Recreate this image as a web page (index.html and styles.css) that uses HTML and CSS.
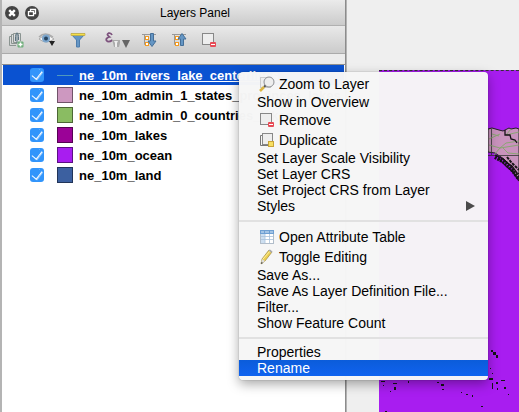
FILE: index.html
```html
<!DOCTYPE html>
<html lang="en">
<head>
<meta charset="utf-8">
<title>Layers Panel</title>
<link rel="stylesheet" href="styles.css">
</head>
<body>
<main class="app">
  <section class="panel">
    <header class="titlebar">
      <button class="round" aria-label="Close panel"><svg width="14" height="14" viewBox="0 0 14 14"><circle cx="7" cy="7" r="7" fill="#444"/><path d="M4.2 4.2l5.6 5.6M9.8 4.2L4.2 9.8" stroke="#fff" stroke-width="2.4"/></svg></button>
      <button class="round" aria-label="Float panel"><svg width="14" height="14" viewBox="0 0 14 14"><circle cx="7" cy="7" r="7" fill="#444"/><path d="M5.5 5.5v-2h5v4h-2M3.5 5.7h5v4h-5z" fill="none" stroke="#fff" stroke-width="1.3"/></svg></button>
      <h1 class="title">Layers Panel</h1>
    </header>
    <div class="toolbar">
      <button class="tool" aria-label="Add group"><svg width="16" height="16" viewBox="0 0 16 16"><path d="M3 4.500H1.500v9H8M5 2.500H3.500v9H9" fill="none" stroke="#8b9491"/><path d="M9 10.500H5.500v-9h7V9" fill="none" stroke="#8b9491"/><path d="M7.500 9V4.500q0-3 1.500-3t1.500 3V8M9 .5V11" fill="none" stroke="#5d7480"/><rect x="9.500" y="9.500" width="6" height="6" rx="1" fill="#6fae7b"/><path d="M12.500 10.500v4M10.500 12.500h4" stroke="#fff" stroke-width="1.500"/></svg></button>
      <button class="tool" aria-label="Manage layer visibility"><svg width="18" height="16" viewBox="0 0 18 16"><path d="M1 5Q7-1 15 5" fill="none" stroke="#aaa" stroke-width="1.500"/><path d="M1 7Q8 0 16 7Q8 13 1 7z" fill="#f5f5f5" stroke="#aaa"/><circle cx="8" cy="6.500" r="4" fill="#7ba5cc"/><circle cx="8" cy="6.500" r="2" fill="#27445f"/><path d="M11 9h6l-3 5z" fill="#222"/></svg></button>
      <button class="tool" aria-label="Filter legend"><svg width="16" height="16" viewBox="0 0 16 16"><path d="M1 2l5.500 6v7h3V8L15 2z" fill="#6596c4" stroke="#4d7cac"/><path d="M1 1.500h14v2H1z" fill="#f5df47" stroke="#c3a634" stroke-width=".6"/></svg></button>
      <button class="tool tool-wide" aria-label="Filter by expression"><svg width="26" height="18" viewBox="0 0 26 18"><path d="M7 4Q6 1.500 3.500 2.200Q1 3.500 4.500 6Q.5 7 1.500 9.500Q3.500 12 7.500 9" fill="none" stroke="#7d527d" stroke-width="1.800"/><path d="M7 9h8v3l-1 4H9l-1-4z" fill="#aaa"/><path d="M9 10h4l-1 2v4h-2v-4z" fill="#eee"/><path d="M17 9h8l-4 8z" fill="#666"/></svg></button>
      <button class="tool" aria-label="Expand all"><svg width="16" height="16" viewBox="0 0 16 16"><path d="M1 2.500h14M3.500 2v10.500H6M3.500 6H6" fill="none" stroke="#999"/><rect x="4.500" y="4.500" width="3" height="3" fill="#fff" stroke="#f39a20"/><rect x="4.500" y="10.500" width="3" height="3" fill="#fff" stroke="#f39a20"/><path d="M9.500 1.500h3V9H15l-4 5.500L7 9h2.500z" fill="#6596c4" stroke="#456f98"/></svg></button>
      <button class="tool" aria-label="Collapse all"><svg width="16" height="16" viewBox="0 0 16 16"><path d="M1 2.500h14M3.500 2v10.500H6M3.500 6H6" fill="none" stroke="#999"/><rect x="4.500" y="4.500" width="3" height="3" fill="#fff" stroke="#f39a20"/><rect x="4.500" y="10.500" width="3" height="3" fill="#fff" stroke="#f39a20"/><path d="M9.500 13.500h3V7H15l-4-5.500L7 7h2.500z" fill="#6596c4" stroke="#456f98"/></svg></button>
      <button class="tool" aria-label="Remove layer"><svg width="16" height="16" viewBox="0 0 16 16"><rect x="1.500" y="1.500" width="11" height="11" fill="#eee" stroke="#888"/><rect x="9" y="10" width="6" height="5" rx="1" fill="#e74b56"/><path d="M10 12.500h4" stroke="#fff"/></svg></button>
    </div>
    <ul class="tree">
      <li class="layer selected"><input type="checkbox" id="rivers" checked><span class="line"></span><label for="rivers">ne_10m_rivers_lake_centerlines</label></li>
      <li class="layer"><input type="checkbox" id="states" checked><span class="swatch pink"></span><label for="states">ne_10m_admin_1_states_provinces_lakes</label></li>
      <li class="layer"><input type="checkbox" id="countries" checked><span class="swatch green"></span><label for="countries">ne_10m_admin_0_countries_lakes</label></li>
      <li class="layer"><input type="checkbox" id="lakes" checked><span class="swatch plum"></span><label for="lakes">ne_10m_lakes</label></li>
      <li class="layer"><input type="checkbox" id="ocean" checked><span class="swatch violet"></span><label for="ocean">ne_10m_ocean</label></li>
      <li class="layer"><input type="checkbox" id="land" checked><span class="swatch blue"></span><label for="land">ne_10m_land</label></li>
    </ul>
  </section>
  <section class="canvas">
    <div class="map">
      <svg width="140" height="341" viewBox="379 71 140 341" role="img" aria-label="Map">
        <path d="M488 129l4-1 7 2 4 1 2-1 4-2 2 1 5-1 3 1v50l-4-5-4-8-7-7-9-6-7-1z" fill="#c993bd" stroke="#222"/>
        <path d="M491.500 129v26M488 155.500h31" stroke="#333" stroke-width=".8"/>
        <path d="M489 139l11-5M489 145l11 3 19-3M500 148l-6 7M511 129l-5 6 13-3M492 134l7 2M500 148l6-5 13-2M503 148l5 5 11 1" fill="none" stroke="#83a86b" stroke-width=".9"/>
        <path d="M505 130v5h5l1 4 4 1 2 3M495 155l8 4 4 4 5 3 5 7 3 1M499 159l8 8 5 4 7 10" fill="none" stroke="#171017" stroke-width="1.300"/>
        <path d="M495 157l11 6 7 8 6 8" fill="none" stroke="#151515" stroke-width="4" stroke-dasharray="2 1"/>
        <path d="M507 157l4 5 8 8" fill="none" stroke="#151515" stroke-width="2" stroke-dasharray="3 1"/>
        <path d="M491 350h2v2h-2zM493 352h3v3h-3zM496 355h2v3h-2zM490 368h1v1h-1zM492 373h1v1h-1zM489 378h4v2h-4zM492 383h1v6h-1zM496 382h2v2h-2zM501 380h4v1h-4zM497 388h1v2h-1zM504 387h2v2h-2zM508 394h1v1h-1zM381 381h4v1h-4zM383 385h1v1h-1zM393 383h4v1h-4zM394 387h2v3h-2zM390 391h1v1h-1zM408 381h1v2h-1zM437 382h2v1h-2zM441 384h3v2h-3zM442 389h2v1h-2zM461 392h1v1h-1zM466 394h2v1h-2zM472 395h1v2h-1zM481 406h2v1h-2zM385 411h2v1h-2z" fill="#141414"/>
      </svg>
    </div>
  </section>
</main>
<nav class="menu" aria-label="Layer actions">
  <button class="item with-icon"><svg width="16" height="16" viewBox="0 0 16 16"><rect x="1.500" y="1.500" width="10" height="10" fill="#eee" stroke="#ccc"/><circle cx="10" cy="6" r="5" fill="#eee" stroke="#8e9094"/><path d="M6.500 9.500L5 11" stroke="#555" stroke-width="2"/><path d="M5 11l-4 4" stroke="#dcb642" stroke-width="2.500"/></svg>Zoom to Layer</button>
  <button class="item">Show in Overview</button>
  <button class="item with-icon"><svg width="16" height="16" viewBox="0 0 16 16"><rect x="1.500" y="1.500" width="11" height="11" fill="#eee" stroke="#888"/><rect x="9" y="10" width="6" height="5" rx="1" fill="#e74b56"/><path d="M10 12.500h4" stroke="#fff"/></svg>Remove</button>
  <button class="item with-icon"><svg width="16" height="16" viewBox="0 0 16 16"><path d="M3 3.500H1.500v10h9" fill="none" stroke="#777"/><rect x="3.500" y="1.500" width="10" height="11" fill="#eee" stroke="#888"/><rect x="9.500" y="9.500" width="5" height="5" fill="#f7df62" stroke="#c9a439"/></svg>Duplicate</button>
  <button class="item">Set Layer Scale Visibility</button>
  <button class="item">Set Layer CRS</button>
  <button class="item">Set Project CRS from Layer</button>
  <button class="item">Styles<span class="arrow"></span></button>
  <hr class="rule">
  <button class="item with-icon"><svg width="16" height="16" viewBox="0 0 16 16"><rect x="1.500" y="1.500" width="13" height="13" fill="#fff" stroke="#b1bdca"/><path d="M1 1h14v4H1z" fill="#6e9fd2"/><path d="M2 3h3M6 3h4M11 3h3" stroke="#d8e8f8"/><path d="M2 5h4v9H2z" fill="#cddff1"/><path d="M2 7.500h12M2 10.500h12M6 5v9M10.500 5v9" stroke="#a8c2dc" stroke-width=".8"/></svg>Open Attribute Table</button>
  <button class="item with-icon"><svg width="16" height="16" viewBox="0 0 16 16"><path d="M2 15l1-5 7-9 3 2-7 9z" fill="#edcf50" stroke="#9f8b42" stroke-width=".7"/><path d="M4 10l7-8" stroke="#fff1a1"/><path d="M2 15l1-5 3 2z" fill="#ddd"/><path d="M2 15l.5-2 1.500 1z" fill="#333"/><path d="M9.500 1.500L11 .5l2.500 2-1 1.500z" fill="#aaa"/></svg>Toggle Editing</button>
  <button class="item">Save As...</button>
  <button class="item">Save As Layer Definition File...</button>
  <button class="item">Filter...</button>
  <button class="item">Show Feature Count</button>
  <hr class="rule">
  <button class="item">Properties</button>
  <button class="item active">Rename</button>
</nav>
</body>
</html>
```
FILE: styles.css
```css
* { box-sizing: border-box; }
body {
  margin: 0;
  font-family: "Liberation Sans", Arial, sans-serif;
  background: #efefef;
  color: #000;
}
button {
  padding: 0;
  border: 0;
  background: none;
  font: inherit;
  color: inherit;
}
svg { display: block; flex: none; }
.app {
  display: grid;
  grid-template-columns: 2fr 1fr;
  min-height: 100vh;
}
.panel {
  display: flex;
  flex-direction: column;
  min-width: 0;
  border-left: 2px solid #b4b4b4;
  border-right: 1px solid #8c8c8c;
  background: #ececec;
}
.titlebar {
  display: flex;
  align-items: center;
  gap: 6px;
  height: 26px;
  padding: 0 0 0 3px;
  border-bottom: 1px solid #b0b0b0;
  background: linear-gradient(#ebebeb, #cbcbcb);
}
.title {
  flex: 1;
  margin: 0;
  font-size: 12px;
  font-weight: 400;
  text-align: center;
}
.toolbar {
  display: flex;
  align-items: center;
  gap: 14px;
  height: 28px;
  padding: 0 6px;
  border-bottom: 1px solid #aaa;
  background: linear-gradient(#e9e9e9, #cbcbcb);
}
.tool-wide { margin: 0 -4px 0 5px; }
.tree {
  flex: 1;
  margin: 10px 0 0;
  padding: 0;
  border-top: 1px solid #8f8f8f;
  background: #fff;
  list-style: none;
  overflow: hidden;
}
.layer {
  display: flex;
  align-items: center;
  height: 20px;
  margin: 0 1px;
  padding-left: 27px;
  font-size: 13px;
  font-weight: 700;
  white-space: nowrap;
}
.selected {
  background: #0a52d1;
  color: #fff;
  text-decoration: underline;
}
.layer input {
  appearance: none;
  display: grid;
  place-items: center;
  flex: none;
  width: 14px;
  height: 14px;
  margin: 0 13px 0 0;
  border-radius: 3px;
  background: #3295fb;
}
.layer input:checked::before {
  content: "";
  width: 5px;
  height: 9px;
  margin-bottom: 2px;
  border: solid #fff;
  border-width: 0 1px 1px 0;
  box-shadow: 1px 0 0 rgba(255, 255, 255, 0.5);
  transform: rotate(38deg);
}
.swatch, .line {
  flex: none;
  width: 16px;
  margin-right: 6px;
}
.swatch {
  height: 16px;
  border: 1px solid rgba(0, 0, 0, 0.45);
}
.line { height: 1px; background: #4f98bd; }
.pink { background: #cd98c0; }
.green { background: #8abc62; }
.plum { background: #9b0297; }
.violet { background: #a81df0; }
.blue { background: #3c60a0; }
.canvas {
  display: flex;
  min-width: 0;
  padding: 70px 0 0 32px;
  border-left: 1px solid #b4b4b4;
}
.map {
  flex: 1;
  min-width: 0;
  overflow: hidden;
  border-top: 1px dashed #333;
  background: #a81df0;
}
.menu {
  position: absolute;
  top: 72px;
  left: 239px;
  display: flex;
  flex-direction: column;
  width: 249px;
  padding: 2px 0 4px;
  border-radius: 4px;
  background: rgba(246, 246, 246, 0.985);
  box-shadow: 0 0 1px rgba(0, 0, 0, 0.5), 0 4px 12px rgba(0, 0, 0, 0.35);
  font-size: 14px;
}
.item {
  display: flex;
  align-items: center;
  gap: 4px;
  height: 16px;
  padding: 0 13px 0 18px;
  line-height: 16px;
  text-align: left;
  white-space: nowrap;
}
.with-icon { height: 20px; padding-left: 20px; }
.active {
  background: linear-gradient(#0b5cda, #1063ef);
  color: #fff;
}
.arrow {
  margin-left: auto;
  border: solid transparent;
  border-width: 5px 0 5px 9px;
  border-left-color: #4b4b4b;
}
.rule {
  width: 100%;
  height: 2px;
  margin: 6px 0 5px;
  border: 0;
  background: #e1e1e1;
}
```
